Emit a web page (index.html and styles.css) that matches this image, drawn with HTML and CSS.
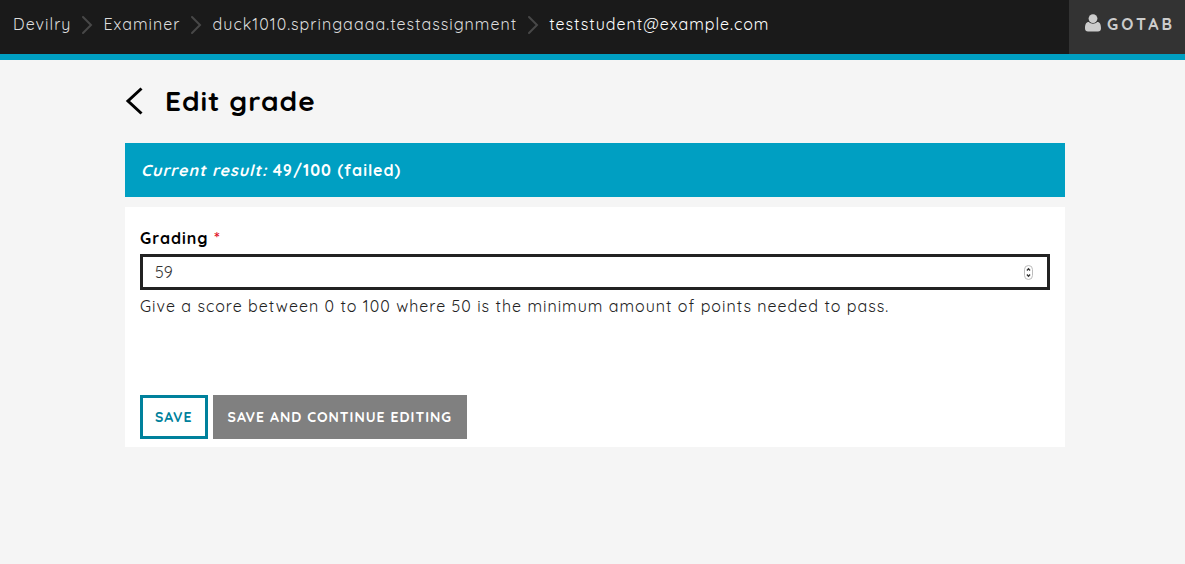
FILE: index.html
```html
<!DOCTYPE html>
<html lang="en">
<head>
  <meta charset="utf-8">
  <meta name="viewport" content="width=device-width, initial-scale=1">
  <title>Edit grade</title>
  <link rel="stylesheet" href="styles.css">
</head>
<body>
  <header class="topbar">
    <nav class="breadcrumb" aria-label="Breadcrumb">
      <a class="crumb" href="#">Devilry</a>
      <svg class="separator" viewBox="0 0 12 20" aria-hidden="true"><path d="M2 2 10 10 2 18"/></svg>
      <a class="crumb" href="#">Examiner</a>
      <svg class="separator" viewBox="0 0 12 20" aria-hidden="true"><path d="M2 2 10 10 2 18"/></svg>
      <a class="crumb" href="#">duck1010.springaaaa.testassignment</a>
      <svg class="separator" viewBox="0 0 12 20" aria-hidden="true"><path d="M2 2 10 10 2 18"/></svg>
      <a class="crumb crumb-active" href="#" aria-current="page">teststudent@example.com</a>
    </nav>
    <button class="account" type="button">
      <svg class="account-icon" viewBox="0 0 16 18" aria-hidden="true"><path d="M0 14.300C0 10.500 1 8 3.800 8 5 9.100 6.400 9.700 8 9.700S11 9.100 12.200 8C15 8 16 10.500 16 14.300 16 16.500 14.800 17.600 13 17.600H3C1.200 17.600 0 16.500 0 14.300Z"/><circle cx="8" cy="4.600" r="4.400"/></svg>
      <span>GOTAB</span>
    </button>
  </header>

  <main class="content">
    <div class="heading">
      <a class="back" href="#" aria-label="Back">
        <svg class="back-icon" viewBox="0 0 18 28" aria-hidden="true"><path d="M16.500 1.500 3 14 16.500 26.500"/></svg>
      </a>
      <h1 class="title">Edit grade</h1>
    </div>

    <p class="result"><em>Current result:</em> 49/100 (failed)</p>

    <form class="panel">
      <label class="label" for="grading">Grading <span class="required">*</span></label>
      <div class="field">
        <input class="input" id="grading" type="number" min="0" max="100" value="59" required aria-describedby="grading-help">
        <svg class="stepper" viewBox="0 0 9 15" aria-hidden="true"><rect class="stepper-frame" x=".5" y=".5" width="8" height="14" rx="4"/><path class="stepper-arrows" d="M2.900 5.500 4.500 3.800 6.100 5.500M2.900 9.500 4.500 11.200 6.100 9.500"/></svg>
      </div>
      <p class="help" id="grading-help">Give a score between 0 to 100 where 50 is the minimum amount of points needed to pass.</p>
      <div class="actions">
        <button class="button button-primary" type="submit">SAVE</button>
        <button class="button button-secondary" type="submit">SAVE AND CONTINUE EDITING</button>
      </div>
    </form>
  </main>
</body>
</html>
```

FILE: styles.css
```css
* {
  box-sizing: border-box;
}

body {
  margin: 0;
  background: #f5f5f5;
  color: #222;
  font-family: Quicksand, Lato, sans-serif;
  font-size: 16px;
  line-height: 24px;
  letter-spacing: 1px;
}

.topbar {
  display: flex;
  justify-content: space-between;
  min-height: 60px;
  border-bottom: 6px solid #009fc2;
  background: #1a1a1a;
}

.breadcrumb {
  display: flex;
  align-items: center;
  gap: 10px;
  padding: 0 13px 6px;
}

.crumb {
  color: #ddd;
  text-decoration: none;
}

.crumb-active {
  color: #fff;
}

.separator {
  width: 12px;
  height: 20px;
  margin-top: 2px;
  fill: none;
  stroke: #484848;
  stroke-width: 2;
  stroke-linecap: round;
}

.account {
  display: flex;
  align-items: center;
  gap: 6px;
  padding: 0 10px 6px 16px;
  border: 0;
  background: #333;
  color: #ccc;
  font: inherit;
  font-weight: 700;
  letter-spacing: 3px;
}

.account-icon {
  width: 16px;
  height: 18px;
  margin-bottom: 2px;
  fill: currentColor;
}

.content {
  padding: 23px 120px 0 125px;
}

.heading {
  display: flex;
  align-items: center;
  gap: 22px;
  margin-bottom: 24px;
}

.back {
  display: flex;
  color: #000;
}

.back-icon {
  width: 18px;
  height: 28px;
  fill: none;
  stroke: currentColor;
  stroke-width: 3;
}

.title {
  margin: 0;
  color: #000;
  font-size: 28px;
  line-height: 36px;
}

.result {
  margin: 0 0 10px;
  padding: 15px 16px;
  background: #009fc2;
  color: #fff;
  font-weight: 700;
}

.panel {
  padding: 19px 15px 8px;
  background: #fff;
}

.label {
  display: block;
  margin-bottom: 4px;
  color: #000;
  font-weight: 700;
}

.required {
  color: #e00b1c;
}

.field {
  display: flex;
  align-items: center;
  padding: 0 14px 0 12px;
  border: 3px solid #222;
}

.input {
  flex: 1;
  min-width: 0;
  height: 30px;
  padding: 0;
  border: 0;
  outline: 0;
  background: transparent;
  color: #333;
  font: inherit;
  letter-spacing: normal;
  appearance: textfield;
}

.stepper {
  width: 9px;
  height: 15px;
  fill: none;
}

.stepper-frame {
  stroke: #bbb;
}

.stepper-arrows {
  stroke: #333;
  stroke-width: 1.300;
}

.help {
  margin: 4px 0 77px;
}

.actions {
  display: flex;
  flex-wrap: wrap;
  gap: 5px;
}

.button {
  min-height: 44px;
  padding: 0 12px;
  border: 3px solid;
  font: inherit;
  font-size: 14px;
  font-weight: 700;
  letter-spacing: 1px;
}

.button-primary {
  border-color: #00819c;
  background: #fff;
  color: #00819c;
}

.button-secondary {
  border-color: #808080;
  background: #808080;
  color: #fff;
}
```
